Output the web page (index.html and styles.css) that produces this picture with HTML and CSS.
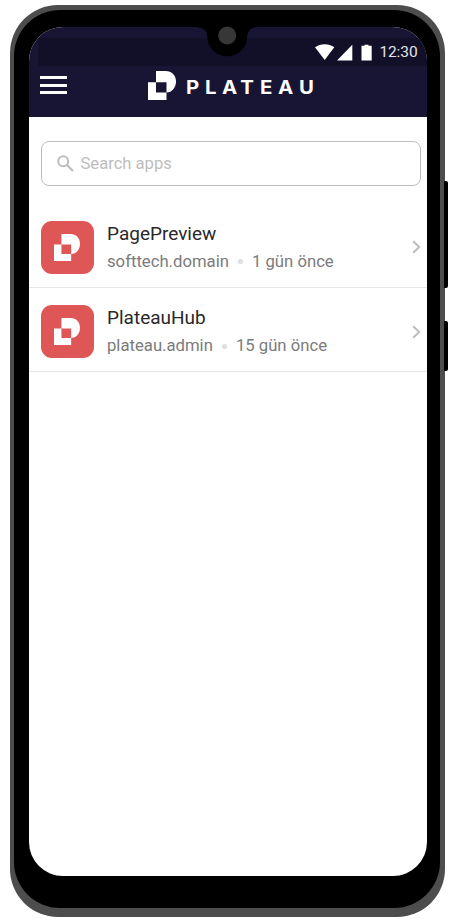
FILE: index.html
```html
<!DOCTYPE html>
<html lang="tr">
<head>
<meta charset="utf-8">
<title>Plateau</title>
<link rel="stylesheet" href="styles.css">
</head>
<body>
<svg class="defs" width="0" height="0" aria-hidden="true">
  <symbol id="mark" viewBox="0 0 28 29">
    <path d="M8 0H17.500C24 0 28 4.500 28 10.500S24 21.500 18.500 21.500V11.300H8Z"/>
    <path d="M0 11.300H8V21.500H18.500V29H0Z"/>
  </symbol>
</svg>
<div class="phone">
  <span class="side-button volume"></span>
  <span class="side-button power"></span>
  <div class="bezel">
    <div class="screen">
      <header class="header">
        <div class="status-bar">
          <svg class="status-icons" width="57" height="17" viewBox="0 0 57 17" fill="#fff">
            <path d="M0 3.300C5.700-.7 13.700-.7 19.300 3.300L9.700 16Z"/>
            <path d="M22 16.500L37.300.8V16.500Z"/>
            <path d="M46.500 1.800H49.500V.8H53.500V1.800H56.700V16.500H46.500Z"/>
          </svg>
          <span class="time">12:30</span>
        </div>
        <div class="title-bar">
          <div class="menu"><i></i><i></i><i></i></div>
          <svg class="brand-mark" width="28" height="29"><use href="#mark"/></svg>
          <svg class="wordmark" width="130" height="20"><text transform="scale(1.1 1)" y="17" x="0 17.300 32.800 49.300 67.300 83.600 102.800">PLATEAU</text></svg>
        </div>
      </header>
      <main>
        <div class="search">
          <svg width="17" height="17" viewBox="0 0 17 17" fill="none" stroke="#bdbdbd"><circle cx="6.200" cy="6.200" r="5" stroke-width="2"/><path d="M10 10L16 16" stroke-width="2.300"/></svg>
          <span>Search apps</span>
        </div>
        <div class="apps">
          <div class="app">
            <div class="app-icon"><svg width="26" height="27"><use href="#mark"/></svg></div>
            <div class="app-text">
              <div class="name">PagePreview</div>
              <div class="meta"><span>softtech.domain</span><i></i><span>1 gün önce</span></div>
            </div>
            <svg class="chevron" width="9" height="14" viewBox="0 0 9 14"><path d="M1.200 1.200L7.200 7L1.200 12.800"/></svg>
          </div>
          <div class="app">
            <div class="app-icon"><svg width="26" height="27"><use href="#mark"/></svg></div>
            <div class="app-text">
              <div class="name">PlateauHub</div>
              <div class="meta"><span>plateau.admin</span><i></i><span>15 gün önce</span></div>
            </div>
            <svg class="chevron" width="9" height="14" viewBox="0 0 9 14"><path d="M1.200 1.200L7.200 7L1.200 12.800"/></svg>
          </div>
        </div>
      </main>
    </div>
    <svg class="notch" width="60" height="48" viewBox="0 0 60 48">
      <path d="M0 0H60V17.200C54 17.200 50.500 21 50.200 26.500A20 19.700 0 0 1 10.200 26.500C10 21 6.500 17.200 0 17.200Z"/>
      <circle cx="30.200" cy="25.500" r="9" fill="#373737"/>
    </svg>
  </div>
</div>
</body>
</html>
```

FILE: styles.css
```css
* { box-sizing: border-box; }
body {
  margin: 0;
  background: #fff;
  font-family: Roboto, "Liberation Sans", sans-serif;
}
.defs { display: block; }
.phone {
  position: relative;
  width: 434.500px;
  height: 911.500px;
  margin: 5px 0 0 10px;
  padding: 5px 5px 9px 4px;
  background: #4d4d4d;
  border-radius: 48px;
}
.side-button {
  position: absolute;
  left: 434px;
  width: 4px;
  background: #000;
  border-radius: 0 2px 2px 0;
}
.volume { top: 176px; height: 107px; }
.power { top: 316px; height: 50px; }
.bezel {
  position: relative;
  height: 100%;
  padding: 17px 13px 31.500px 14.500px;
  background: #000;
  border-radius: 46px;
}
.screen {
  height: 100%;
  overflow: hidden;
  background: #fff;
  border-radius: 34px;
}
.notch {
  position: absolute;
  left: 182.500px;
  top: 0;
}
.header {
  height: 90.400px;
  padding-top: 11px;
  background: #181433;
}
.status-bar {
  display: flex;
  align-items: center;
  justify-content: flex-end;
  height: 28px;
  margin-left: 9.500px;
  padding-right: 9px;
  background: #121029;
}
.status-icons { margin-right: 7px; }
.time {
  color: #e4e4e8;
  font-size: 15.500px;
  line-height: 20px;
  letter-spacing: -.1px;
}
.title-bar {
  display: flex;
  padding: 5px 0 0 11.800px;
}
.menu {
  display: grid;
  gap: 4.500px;
  width: 27px;
  height: 18px;
  margin: 5px 80.700px 0 0;
}
.menu i { height: 3px; background: #fff; }
.brand-mark { fill: #fff; }
.wordmark {
  margin: 6px 0 0 10px;
  overflow: visible;
  fill: #fff;
  font-family: Inter, sans-serif;
  font-size: 18.500px;
  font-weight: 700;
}
.search {
  display: flex;
  align-items: center;
  height: 45px;
  margin: 23.400px 5.500px 0 12px;
  padding-left: 15px;
  border: 1px solid #bdbdbd;
  border-radius: 8px;
  color: #bdbdbd;
  font-size: 16.600px;
}
.search svg { margin-right: 7px; }
.apps { padding-top: 18px; }
.app {
  display: flex;
  align-items: center;
  height: 84.300px;
  padding: 0 5.500px 0 12px;
  border-bottom: 1.500px solid #e6e6e6;
}
.app-icon {
  display: flex;
  align-items: center;
  justify-content: center;
  width: 53.500px;
  height: 53.500px;
  margin: 4px 13px 0 0;
  background: #df5656;
  border-radius: 11px;
  fill: #fff;
}
.app-text { flex: 1; padding-top: 5px; }
.name { color: #292929; font-size: 19px; line-height: 28px; }
.meta {
  display: flex;
  align-items: center;
  color: #7b7b7b;
  font-size: 16.700px;
  line-height: 28.500px;
}
.meta i {
  width: 5px;
  height: 5px;
  margin: 0 9px;
  background: #dedede;
  border-radius: 50%;
}
.chevron {
  margin-top: 4px;
  fill: none;
  stroke: #bdbdbd;
  stroke-width: 2;
}
```
